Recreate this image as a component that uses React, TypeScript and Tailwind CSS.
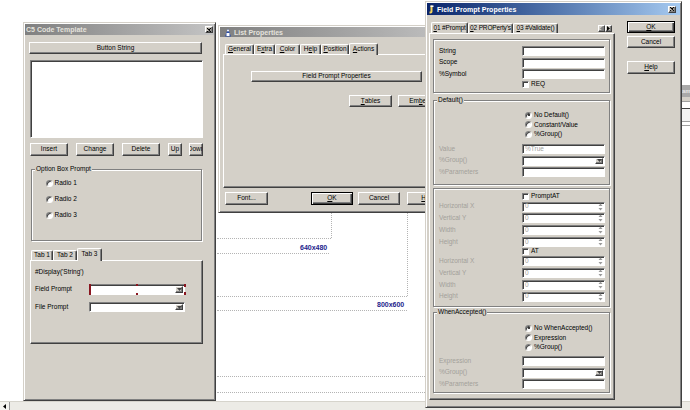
import React from "react";

// classic 3d borders
const raised =
  "border border-t-white border-l-white border-r-[#404040] border-b-[#404040] shadow-[inset_-1px_-1px_#808080] bg-[#d4d0c8]";
const defBtn =
  "border border-black shadow-[inset_1px_1px_white,inset_-1px_-1px_#404040,inset_-2px_-2px_#808080] bg-[#d4d0c8]";
const sunken =
  "border border-t-[#808080] border-l-[#808080] border-r-white border-b-white shadow-[inset_1px_1px_#404040] bg-white";
const frame =
  "border border-t-[#d4d0c8] border-l-[#d4d0c8] border-r-[#404040] border-b-[#404040] shadow-[inset_1px_1px_white,inset_-1px_-1px_#808080] p-[1px] bg-[#d4d0c8]";
const panel =
  "border border-t-white border-l-white border-r-[#404040] border-b-[#404040] shadow-[inset_-1px_-1px_#808080]";
const etched = "border border-[#808080] shadow-[inset_1px_1px_white,1px_1px_white]";

type P = { className?: string; children?: React.ReactNode };

function Btn({ className = "", children, def = false }: P & { def?: boolean }) {
  return (
    <div
      className={`${def ? defBtn : raised} flex items-center justify-center overflow-hidden whitespace-nowrap ${className}`}
    >
      {children}
    </div>
  );
}

function CloseBox({ className = "" }: P) {
  return (
    <div className={`${raised} flex h-[7px] w-[8px] items-center justify-center ${className}`}>
      <svg width="4" height="4" viewBox="0 0 4 4">
        <path d="M0 0 L4 4 M4 0 L0 4" stroke="black" strokeWidth="1.1" />
      </svg>
    </div>
  );
}

function TitleBar({
  title,
  active = false,
  icon,
  className = "",
  closeClass = "",
}: {
  title: string;
  active?: boolean;
  icon?: React.ReactNode;
  className?: string;
  closeClass?: string;
}) {
  return (
    <div
      className={`flex items-center gap-[2px] whitespace-nowrap text-[7px] font-bold ${
        active
          ? "bg-linear-to-r from-[#0a246a] to-[#a6caf0] text-white"
          : "bg-linear-to-r from-[#808080] to-[#c4c4c4] text-[#e4e2dc]"
      } ${className}`}
    >
      {icon}
      <span>{title}</span>
      <CloseBox className={`ml-auto ${closeClass}`} />
    </div>
  );
}

function Tab({ sel = false, className = "", children }: P & { sel?: boolean }) {
  return (
    <div
      className={`${
        sel ? "relative z-10 -mb-[1px] bg-[#d4d0c8]" : ""
      } flex shrink-0 items-center justify-center overflow-hidden whitespace-nowrap rounded-t-[2px] border border-b-0 border-t-white border-l-white border-r-[#404040] shadow-[inset_-1px_0_#808080] ${className}`}
    >
      {children}
    </div>
  );
}

function Radio({ on = false }: { on?: boolean }) {
  return (
    <div className="flex h-[7px] w-[7px] shrink-0 items-center justify-center rounded-full border border-t-[#808080] border-l-[#808080] border-r-white border-b-white bg-white shadow-[inset_1px_1px_#404040]">
      {on && <div className="h-[2px] w-[2px] rounded-full bg-black" />}
    </div>
  );
}

function Check() {
  return (
    <div className="h-[7px] w-[7px] shrink-0 border border-t-[#808080] border-l-[#808080] border-r-white border-b-white bg-white shadow-[inset_1px_1px_#404040]" />
  );
}

function DownArrow({ color = "black" }: { color?: string }) {
  return (
    <svg width="5" height="3" viewBox="0 0 5 3">
      <path d="M0 0 H5 L2.5 3 Z" fill={color} />
    </svg>
  );
}

function Combo({ className = "" }: P) {
  return (
    <div className={`${sunken} flex items-stretch justify-end p-[1px] ${className}`}>
      <div className={`${raised} flex w-[8px] items-center justify-center`}>
        <DownArrow color="#404040" />
      </div>
    </div>
  );
}

function Spin() {
  return (
    <div className={`${sunken} flex h-[10px] w-[83px] items-center justify-between pl-[2px] pr-[1px] text-[#a0a0a0]`}>
      <span>0</span>
      <svg width="5" height="8" viewBox="0 0 5 8">
        <path d="M2.5 0.5 L4.5 3 H0.5 Z M0.5 5 H4.5 L2.5 7.5 Z" fill="#9a9a9a" />
      </svg>
    </div>
  );
}

function GroupLabel({ className = "", children }: P) {
  return <div className={`-mt-[4px] w-fit bg-[#d4d0c8] px-[1px] ${className}`}>{children}</div>;
}

function LabelRow({ label, dim = false, children, className = "" }: P & { label: string; dim?: boolean }) {
  return (
    <div className={`flex h-[10px] items-center ${className}`}>
      <span className={`w-[83px] ${dim ? "text-[#a3a09a]" : ""}`}>{label}</span>
      {children}
    </div>
  );
}

function Field({ text, className = "" }: { text?: string; className?: string }) {
  return (
    <div className={`${sunken} flex h-[10px] w-[83px] items-center pl-[2px] text-[#a0a0a0] ${className}`}>
      {text}
    </div>
  );
}

function ListIcon() {
  return (
    <svg width="8" height="9" viewBox="0 0 8 9">
      <path d="M1 8.5 L4 0.5 L7 8.5 Z" fill="#2b4ea8" />
      <rect x="2.5" y="5" width="3" height="3" fill="#ffffff" />
      <circle cx="4" cy="2.5" r="1" fill="#ffffff" />
    </svg>
  );
}

function PromptIcon() {
  return (
    <svg width="6" height="9" viewBox="0 0 6 9">
      <path d="M3.5 0.5 V6.5 Q3.5 8.5 1.5 8.5 H0.5 V6.5 H1.5 V0.5 Z" fill="#f4d35a" />
      <rect x="1.5" y="0.5" width="3" height="1.5" fill="#ffffff" />
    </svg>
  );
}

function CodeTemplate() {
  return (
    <div className={`absolute left-[23px] top-[22px] h-[379px] w-[193px] ${frame}`}>
      <TitleBar title="C5 Code Template" className="h-[11px] pl-[1px]" closeClass="mr-[1px]" />
      <Btn className="ml-[4px] mt-[7px] h-[12px] w-[173px]">Button String</Btn>
      <div className={`ml-[5px] mt-[6px] h-[78px] w-[173px] ${sunken}`} />
      <div className="ml-[5px] mt-[5px] flex h-[13px]">
        <Btn className="w-[38px]">Insert</Btn>
        <Btn className="ml-[8px] w-[38px]">Change</Btn>
        <Btn className="ml-[8px] w-[38px]">Delete</Btn>
        <Btn className="ml-[8px] w-[14px]">Up</Btn>
        <Btn className="ml-[7px] w-[14px]">Down</Btn>
      </div>
      <div className={`ml-[6px] mt-[13px] h-[72px] w-[171px] ${etched}`}>
        <GroupLabel className="ml-[3px]">Option Box Prompt</GroupLabel>
        <div className="mt-[2.5px] flex flex-col">
          {["Radio 1", "Radio 2", "Radio 3"].map((r) => (
            <div key={r} className="flex h-[16px] items-center gap-[1.5px] pl-[14px]">
              <Radio />
              <span>{r}</span>
            </div>
          ))}
        </div>
      </div>
      <div className="ml-[6px] mt-[7px] flex h-[12px] items-end">
        <Tab className="h-[10px] w-[22px]">Tab 1</Tab>
        <Tab className="h-[10px] w-[24px]">Tab 2</Tab>
        <Tab sel className="h-[13px] w-[25px] pb-[2px]">
          Tab 3
        </Tab>
      </div>
      <div className={`ml-[5px] h-[84px] w-[173px] pl-[4px] ${panel}`}>
        <div className="mt-[8px]">#Display('String')</div>
        <div className="mt-[8.5px] flex h-[11px] items-center">
          <span className="w-[54px]">Field Prompt</span>
          <div className="relative h-full w-[96px]">
            <Combo className="h-full w-full" />
            <div className="absolute left-0 top-0 h-full w-[1.5px] bg-[#8a1620]" />
            <div className="absolute left-[-0.5px] top-0 h-[3px] w-[2px] bg-[#8a1620]" />
            <div className="absolute bottom-0 left-[-0.5px] h-[3px] w-[2px] bg-[#8a1620]" />
            <div className="absolute left-[47px] top-0 h-[2px] w-[2px] bg-[#8a1620]" />
            <div className="absolute bottom-0 left-[47px] h-[2px] w-[2px] bg-[#8a1620]" />
            <div className="absolute right-[-1px] top-0 h-[3px] w-[2px] bg-[#8a1620]" />
            <div className="absolute bottom-0 right-[-1px] h-[3px] w-[2px] bg-[#8a1620]" />
          </div>
        </div>
        <div className="mt-[7px] flex h-[10px] items-center">
          <span className="w-[54px]">File Prompt</span>
          <Combo className="h-full w-[96px]" />
        </div>
      </div>
    </div>
  );
}

function ListProperties() {
  return (
    <div className={`absolute left-[218px] top-[25px] h-[188px] w-[242px] ${frame}`}>
      <TitleBar title="List Properties" icon={<ListIcon />} className="h-[10px] pl-[4px]" />
      <div className="ml-[5px] mt-[6px] flex h-[11px] items-end">
        <Tab className="h-[10px] w-[29px]">
          <u>G</u>eneral
        </Tab>
        <Tab className="h-[10px] w-[21px]">
          E<u>x</u>tra
        </Tab>
        <Tab className="h-[10px] w-[25px]">
          <u>C</u>olor
        </Tab>
        <Tab className="h-[10px] w-[21px]">
          H<u>e</u>lp
        </Tab>
        <Tab className="h-[10px] w-[28px]">
          <u>P</u>osition
        </Tab>
        <Tab sel className="h-[12px] w-[29px] pb-[1px]">
          <u>A</u>ctions
        </Tab>
      </div>
      <div className={`ml-[3px] h-[134px] w-[228px] ${panel}`}>
        <Btn className="ml-[27px] mt-[16px] h-[11px] w-[171px]">Field Prompt Properties</Btn>
        <div className="ml-[125px] mt-[13px] flex h-[12px] gap-[6px]">
          <Btn className="w-[43px]">
            <u>T</u>ables
          </Btn>
          <Btn className="w-[43px]">
            Em<u>b</u>ed
          </Btn>
        </div>
      </div>
      <div className="ml-[5px] mt-[4px] flex h-[13px]">
        <Btn className="w-[43px]">Font...</Btn>
        <Btn def className="ml-[43px] w-[42px]">
          <u>O</u>K
        </Btn>
        <Btn className="ml-[5px] w-[42px]">Cancel</Btn>
        <Btn className="ml-[7px] w-[42px]">
          <u>H</u>elp
        </Btn>
      </div>
    </div>
  );
}

function RadioRows({ items, on }: { items: string[]; on: number }) {
  return (
    <div className="flex flex-col">
      {items.map((t, i) => (
        <div key={t} className="flex h-[9.5px] items-center gap-[2px] pl-[86px]">
          <Radio on={i === on} />
          <span>{t}</span>
        </div>
      ))}
    </div>
  );
}

function FieldPrompt() {
  const pos = ["Horizontal X", "Vertical Y", "Width", "Height"];
  return (
    <div className={`absolute left-[425px] top-[1px] h-[407px] w-[257px] ${frame}`}>
      <TitleBar
        active
        title="Field Prompt Properties"
        icon={<PromptIcon />}
        className="h-[12px] pl-[2px]"
        closeClass="mr-[4px]"
      />
      <div className="flex">
        <div className="ml-[2px] mt-[7px] w-[186px]">
          <div className="flex h-[11px] items-end overflow-hidden pl-[2px] tracking-[-0.15px]">
            <Tab sel className="h-[12px] w-[37px] pb-[1px]">
              <u>0</u>1 #Prompt
            </Tab>
            <Tab className="h-[10px] w-[45px]">
              <u>0</u>2 PROPerty's
            </Tab>
            <Tab className="h-[10px] w-[45px]">
              <u>0</u>3 #Validate()
            </Tab>
            <div className="mb-[1px] ml-auto mr-[3px] flex">
              <div className={`${raised} flex h-[7px] w-[7px] items-center justify-center`}>
                <svg width="3" height="5" viewBox="0 0 3 5">
                  <path d="M3 0 V5 L0 2.5 Z" fill="#808080" />
                </svg>
              </div>
              <div className={`${raised} flex h-[7px] w-[7px] items-center justify-center`}>
                <svg width="3" height="5" viewBox="0 0 3 5">
                  <path d="M0 0 V5 L3 2.5 Z" fill="black" />
                </svg>
              </div>
            </div>
          </div>
          <div className={`h-[367px] pl-[3px] pt-[5px] ${panel}`}>
            {/* basics */}
            <div className={`h-[54px] w-[177px] pl-[5px] pt-[6px] ${etched}`}>
              <LabelRow label="String">
                <Field />
              </LabelRow>
              <LabelRow label="Scope" className="mt-[1.5px]">
                <Field />
              </LabelRow>
              <LabelRow label="%Symbol" className="mt-[1.5px]">
                <Field />
              </LabelRow>
              <div className="mt-[2px] flex h-[7px] items-center gap-[2px] pl-[83px]">
                <Check />
                <span>REQ</span>
              </div>
            </div>
            {/* default */}
            <div className={`mt-[7px] h-[85px] w-[177px] pl-[5px] ${etched}`}>
              <GroupLabel className="-ml-[2px]">Default()</GroupLabel>
              <div className="mt-[7px]">
                <RadioRows items={["No Default()", "Constant/Value", "%Group()"]} on={0} />
              </div>
              <LabelRow label="Value" dim className="mt-[5px]">
                <Field text="%True" />
              </LabelRow>
              <LabelRow label="%Group()" dim className="mt-[1.5px]">
                <Combo className="h-[10px] w-[83px]" />
              </LabelRow>
              <LabelRow label="%Parameters" dim className="mt-[1.5px]">
                <Field />
              </LabelRow>
            </div>
            {/* position */}
            <div className={`mt-[3px] h-[119px] w-[177px] pl-[5px] ${etched}`}>
              <div className="mt-[4px] flex h-[7px] items-center gap-[2px] pl-[83px]">
                <Check />
                <span>PromptAT</span>
              </div>
              <div className="mt-[0.3px]">
                {pos.map((p) => (
                  <LabelRow key={p} label={p} dim className="mt-[1.7px]">
                    <Spin />
                  </LabelRow>
                ))}
              </div>
              <div className="mt-[1px] flex h-[7px] items-center gap-[2px] pl-[83px]">
                <Check />
                <span>AT</span>
              </div>
              <div className="mt-[1.3px]">
                {pos.map((p) => (
                  <LabelRow key={p} label={p} dim className="mt-[1.7px]">
                    <Spin />
                  </LabelRow>
                ))}
              </div>
            </div>
            {/* accepted */}
            <div className={`mt-[5px] h-[81px] w-[177px] pl-[5px] ${etched}`}>
              <GroupLabel className="-ml-[2px]">WhenAccepted()</GroupLabel>
              <div className="mt-[8px]">
                <RadioRows items={["No WhenAccepted()", "Expression", "%Group()"]} on={0} />
              </div>
              <LabelRow label="Expression" dim className="mt-[4px]">
                <Field />
              </LabelRow>
              <LabelRow label="%Group()" dim className="mt-[1.5px]">
                <Combo className="h-[10px] w-[83px]" />
              </LabelRow>
              <LabelRow label="%Parameters" dim className="mt-[1.5px]">
                <Field />
              </LabelRow>
            </div>
          </div>
        </div>
        <div className="ml-[12px] mt-[6px] flex w-[48px] flex-col">
          <Btn def className="h-[12px]">
            <u>O</u>K
          </Btn>
          <Btn className="mt-[3px] h-[12px]">Cancel</Btn>
          <Btn className="mt-[13px] h-[13px]">
            <u>H</u>elp
          </Btn>
        </div>
      </div>
    </div>
  );
}

export default function App() {
  return (
    <div className="relative h-[410px] w-[690px] overflow-hidden bg-white font-['Liberation_Sans',Arial,sans-serif] text-[6.5px] leading-none text-black">
      <div className="flex h-full flex-col">
        {/* designer surface with screen-size guides */}
        <div className="relative flex-1">
          <div className="absolute left-[217px] top-[238px] w-[114px] border-t border-dotted border-[#b4b4b4]" />
          <div className="absolute left-[331px] top-[200px] h-[38px] border-l border-dotted border-[#b4b4b4]" />
          <div className="absolute left-[217px] top-[253px] w-[112px] border-t border-dotted border-[#b4b4b4]" />
          <div className="absolute left-[300px] top-[244px] text-[7px] font-bold text-[#1c1c8c]">640x480</div>
          <div className="absolute left-[217px] top-[296px] w-[190px] border-t border-dotted border-[#b4b4b4]" />
          <div className="absolute left-[407px] top-[200px] h-[96px] border-l border-dotted border-[#b4b4b4]" />
          <div className="absolute left-[217px] top-[310px] w-[190px] border-t border-dotted border-[#b4b4b4]" />
          <div className="absolute left-[377px] top-[301px] text-[7px] font-bold text-[#1c1c8c]">800x600</div>
          <div className="absolute left-[217px] top-[376px] w-[210px] border-t border-dotted border-[#b4b4b4]" />
          <div className="absolute left-[217px] top-[392px] w-[210px] border-t border-dotted border-[#b4b4b4]" />
        </div>
        <div className="flex h-[9px] border-t border-[#d6d4cc] bg-[#ecebe6]">
          <div className="flex w-[10px] items-center justify-center border-r border-[#9a9a9a] bg-[#f4f3ef]">
            <svg width="3" height="5" viewBox="0 0 3 5">
              <path d="M3 0 V5 L0 2.5 Z" fill="black" />
            </svg>
          </div>
        </div>
      </div>

      <CodeTemplate />
      <ListProperties />
      <FieldPrompt />

      {/* edge of another window on the right */}
      <div className="absolute left-[682px] top-[85px] w-[8px] overflow-hidden">
        <div className="flex h-[12px] items-center bg-[#a9a9a9] text-[6px] font-bold text-[#e8e8e8]">am</div>
        <div className="h-[4px] bg-[#d4d0c8]" />
        <div className="h-[7px] border-t border-[#a0a0a0] bg-white" />
        <div className="h-[13px] border-t border-[#404040] bg-[#f2f2f2]" />
        <div className="h-[4px] border-t border-[#a0a0a0] bg-white" />
        <div className="border-t border-[#a0a0a0]" />
      </div>
    </div>
  );
}
